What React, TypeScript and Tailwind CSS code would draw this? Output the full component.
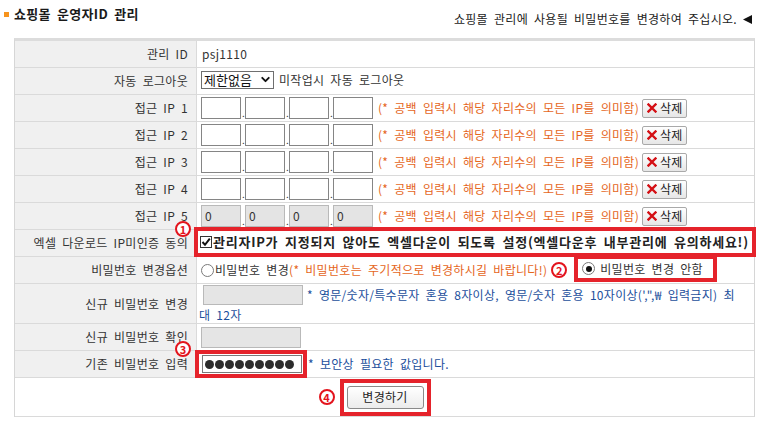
import { Fragment, ReactNode } from "react";
import { ChevronDown } from "lucide-react";

const ORANGE = "text-[#e5661c]";
const BLUE = "text-[#1c4f9c]";

function Num({ n }: { n: string }) {
    return (
        <span className="w-[16px] h-[16px] shrink-0 rounded-full border-2 border-[#e3141d] bg-white text-[#e3141d] text-[11px] font-bold flex items-center justify-center leading-none tracking-normal">
            {n}
        </span>
    );
}

function Radio({ checked }: { checked?: boolean }) {
    return (
        <span className="w-[13px] h-[13px] shrink-0 rounded-full border border-[#7a7a7a] bg-white flex items-center justify-center">
            {checked && <span className="w-[6px] h-[6px] rounded-full bg-[#111]" />}
        </span>
    );
}

function Row({ label, className = "h-[27px]", children }: { label: string; className?: string; children: ReactNode }) {
    return (
        <div className={`flex border-b border-[#dadada] ${className}`}>
            <div className="w-[182px] shrink-0 bg-[#f0f0f0] border-r border-[#dadada] flex items-center justify-end pr-[8px]">
                {label}
            </div>
            <div className="flex-1 flex items-center pl-[4px] relative">{children}</div>
        </div>
    );
}

function IpRow({ label, filled }: { label: string; filled?: boolean }) {
    return (
        <Row label={label}>
            <div className="flex items-end">
                {[0, 1, 2, 3].map((i) => (
                    <Fragment key={i}>
                        {i > 0 && <span className="w-[4px] text-[10px] leading-[12px] text-[#333] pl-[1px]">.</span>}
                        <div
                            className={
                                filled
                                    ? "w-[40px] h-[22px] border border-[#b9b9b9] bg-[#e4e4e4] pl-[3px] flex items-center"
                                    : "w-[40px] h-[22px] border border-[#858585] bg-white"
                            }
                        >
                            {filled && "0"}
                        </div>
                    </Fragment>
                ))}
            </div>
            <span className={`ml-[5px] whitespace-nowrap ${ORANGE}`}>(* 공백 입력시 해당 자리수의 모든 IP를 의미함)</span>
            <button className="ml-[3px] shrink-0 flex items-center gap-[3px] h-[19px] pl-[4px] pr-[3px] border border-[#a9a9a9] rounded-[2px] bg-linear-to-b from-white to-[#e6e6e6] text-[#222]">
                <svg width="10" height="10" viewBox="0 0 10 10">
                    <path d="M1.5 1.5 L8.5 8.5 M8.5 1.5 L1.5 8.5" stroke="#d40f14" strokeWidth="2.4" strokeLinecap="square" />
                </svg>
                삭제
            </button>
        </Row>
    );
}

export default function App() {
    return (
        <div className="w-[764px] h-[423px] bg-white text-[12px] leading-[14px] tracking-[0.3px] [word-spacing:3px] text-[#333] font-['Noto_Sans_CJK_KR','Noto_Sans',sans-serif] overflow-hidden">
            {/* Header */}
            <header className="flex justify-between h-[38px]">
                <div className="flex items-center mt-[5px] h-[18px]">
                    <span className="ml-[4px] w-[5px] h-[5px] bg-[#f7941d]" />
                    <h1 className="ml-[5px] text-[13px] font-bold text-[#1a1a1a]">쇼핑몰 운영자ID 관리</h1>
                </div>
                <div className="flex items-center mt-[11px] h-[16px] mr-[12px] gap-[6px] text-[#222]">
                    <span>쇼핑몰 관리에 사용될 비밀번호를 변경하여 주십시오.</span>
                    <svg width="9" height="9" viewBox="0 0 9 9">
                        <path d="M0 4.5 L9 0 L9 9 Z" fill="#111" />
                    </svg>
                </div>
            </header>

            {/* Form table */}
            <div className="ml-[14px] w-[741px] border-t-[3px] border-t-[#dcdcdc] border-x border-x-[#d6d6d6]">
                <Row label="관리 ID">
                    <span className="ml-[1px]">psj1110</span>
                </Row>

                <Row label="자동 로그아웃">
                    <div className="flex items-center justify-between h-[18px] w-[73px] border border-[#6f6f6f] pl-[2px] pr-[1px] -mt-[3px] text-[13px] tracking-normal text-[#111]">
                        <span>제한없음</span>
                        <ChevronDown size={13} strokeWidth={3.5} className="text-[#111]" />
                    </div>
                    <span className="ml-[5px] -mt-[3px]">미작업시 자동 로그아웃</span>
                </Row>

                <IpRow label="접근 IP 1" />
                <IpRow label="접근 IP 2" />
                <IpRow label="접근 IP 3" />
                <IpRow label="접근 IP 4" />
                <IpRow label="접근 IP 5" filled />

                <Row label="엑셀 다운로드 IP미인증 동의">
                    <div className="absolute left-[-22px] top-[-9px]">
                        <Num n="1" />
                    </div>
                    <div className="-ml-[7px] -mt-[3px] h-[30px] w-[562px] border-4 border-[#e5232b] flex items-center pl-[2px]">
                        <span className="w-[12px] h-[12px] shrink-0 border border-[#333] bg-white flex items-center justify-center">
                            <svg width="10" height="10" viewBox="0 0 10 10">
                                <path d="M1.5 5 L4 7.8 L8.8 1.6" stroke="#111" strokeWidth="2" fill="none" />
                            </svg>
                        </span>
                        <span className="ml-[1px] text-[13px] font-bold tracking-[0.75px] whitespace-nowrap text-[#222]">
                            관리자IP가 지정되지 않아도 엑셀다운이 되도록 설정(엑셀다운후 내부관리에 유의하세요!)
                        </span>
                    </div>
                </Row>

                <Row label="비밀번호 변경옵션">
                    <Radio />
                    <span className="ml-[1px] whitespace-nowrap">비밀번호 변경</span>
                    <span className={`whitespace-nowrap ${ORANGE}`}>(* 비밀번호는 주기적으로 변경하시길 바랍니다!)</span>
                    <span className="ml-[4px]">
                        <Num n="2" />
                    </span>
                    <div className="ml-[7px] shrink-0 -mt-[3px] h-[27px] border-4 border-[#e5232b] flex items-center pl-[4px] pr-[10px] gap-[5px]">
                        <Radio checked />
                        <span className="whitespace-nowrap">비밀번호 변경 안함</span>
                    </div>
                </Row>

                <Row label="신규 비밀번호 변경" className="h-[40px]">
                    <div className="self-start leading-[19px] pt-[1px] -ml-[2px]">
                        <span className="inline-block align-top ml-[4px] w-[100px] h-[20px] bg-[#e5e5e5] border border-[#b9b9b9]" />
                        <span className={`ml-[4px] ${BLUE}`}>
                            * 영문/숫자/특수문자 혼용 8자이상, 영문/숫자 혼용 10자이상(',",₩ 입력금지) 최
                            <br />대 12자
                        </span>
                    </div>
                </Row>

                <Row label="신규 비밀번호 확인">
                    <span className="w-[100px] h-[21px] bg-[#e5e5e5] border border-[#b9b9b9]" />
                </Row>

                <Row label="기존 비밀번호 입력">
                    <div className="absolute left-[-22px] top-[-10px]">
                        <Num n="3" />
                    </div>
                    <div className="-ml-[6px] -my-[1px] h-[28px] border-4 border-[#e5232b] flex items-center pl-[3px] pr-[1px]">
                        <div className="w-[100px] h-[18px] border border-[#7a7a7a] bg-white flex items-center gap-[1px] pl-[2px]">
                            {Array.from({ length: 9 }).map((_, i) => (
                                <span key={i} className="w-[9px] h-[9px] rounded-full bg-[#2b2b2b]" />
                            ))}
                        </div>
                    </div>
                    <span className={`ml-[1px] ${BLUE}`}>* 보안상 필요한 값입니다.</span>
                </Row>

                <div className="h-[39px] border-b border-[#dadada] flex items-center justify-center gap-[5px] pr-[20px]">
                    <Num n="4" />
                    <div className="h-[37px] border-4 border-[#e5232b] flex items-center px-[3px]">
                        <button className="w-[77px] h-[23px] border border-[#8a8a8a] rounded-[3px] bg-linear-to-b from-white to-[#ececec] text-[#222] text-[12px]">
                            변경하기
                        </button>
                    </div>
                </div>
            </div>
        </div>
    );
}
